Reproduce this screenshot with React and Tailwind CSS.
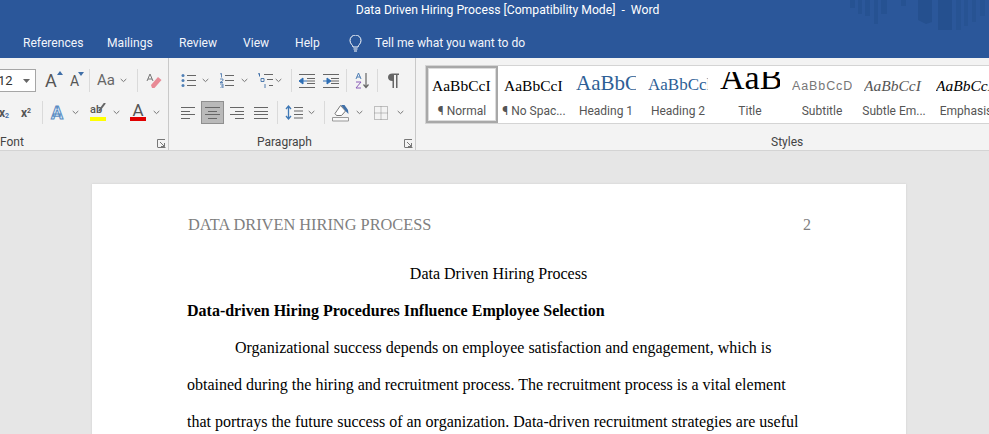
import React from "react";

const Chev = ({ className = "" }) => (
  <svg width="7" height="5" viewBox="0 0 7 5" className={`shrink-0 ${className}`} fill="none" stroke="#777" strokeWidth="1"><path d="M.7 1l2.800 2.600L6.300 1" /></svg>
);
const Sep = ({ className = "" }) => <div className={`w-px h-[23px] bg-[#dadada] shrink-0 ${className}`} />;
const Launcher = ({ className = "" }) => (
  <svg width="9" height="9" viewBox="0 0 9 9" className={`shrink-0 ${className}`} fill="none" stroke="#777" strokeWidth="1"><path d="M.5 8V.5H8M3 3l4.500 4.500M7.500 4v3.500H4M.5 8.500h8" /></svg>
);
const Lines = ({ rows, className = "", w = 15, h = 12, color = "#666" }) => (
  <svg width={w} height={h} viewBox={`0 0 ${w} ${h}`} className={`shrink-0 ${className}`} stroke={color} strokeWidth="1" fill="none">
    {rows.map((r, i) => <path key={i} d={`M${r[0]} ${Math.round(i * (h - 1) / (rows.length - 1)) + 0.5}H${r[1]}`} />)}
  </svg>
);
const ListIcon = ({ kind, className = "" }) => (
  <svg width="15" height="15" viewBox="0 0 15 15" className={`shrink-0 ${className}`} fill="none">
    <path d="M6 2.500h9M6 7.500h9M6 12.500h9" stroke="#666" />
    {kind === "b" ? (
      <g fill="#4f7fb5"><circle cx="2" cy="2.500" r="1.500" /><circle cx="2" cy="7.500" r="1.500" /><circle cx="2" cy="12.500" r="1.500" /></g>
    ) : (
      <g stroke="#3f6fa8"><path d="M1 1l1.500-.5v4M1 6h3v1.500L1 9.500h3M1 11h3v4H1M2 13h2" strokeWidth=".8" /></g>
    )}
  </svg>
);
const Multi = ({ className = "" }) => (
  <svg width="16" height="15" viewBox="0 0 16 15" className={`shrink-0 ${className}`} fill="none">
    <path d="M7 1.500h9M10 6.500h6M12 12.500h4" stroke="#666" />
    <path d="M1 1l1.500-.5v3" stroke="#3f6fa8" />
    <path d="M4 5.500h3v3H4zM8 11v4" stroke="#3f6fa8" strokeWidth=".9" />
  </svg>
);
const Indent = ({ flip, className = "" }) => (
  <svg width="16" height="14" viewBox="0 0 16 14" className={`shrink-0 ${className}`} fill="none">
    <path d="M0 .5h16M0 13.500h16M8 4.500h8M8 7h8M8 9.500h8" stroke="#666" />
    {flip ? <path d="M0 7h4V4l4 3-4 3V7" fill="#2f6fb5" stroke="#2f6fb5" /> : <path d="M8 7H4V4L0 7l4 3V7" fill="#2f6fb5" stroke="#2f6fb5" />}
  </svg>
);

function FontGroup() {
  return (
    <section className="w-[169px] shrink-0 h-[92px] relative border-r border-[#c9c9c9] overflow-hidden">
      <div className="flex items-center h-[23px] mt-[11px]">
        <div className="w-[46px] -ml-[10px] h-[23px] bg-white border border-[#a6a6a6] flex items-center shrink-0">
          <span className="ml-[7px] text-[13px] text-[#333] w-[25px]">12</span>
          <svg width="7" height="4" viewBox="0 0 7 4"><path d="M0 0h7L3.500 4z" fill="#666" /></svg>
        </div>
        <div className="ml-[9px] w-[14px] text-[18px] leading-none text-[#555] relative">A<svg width="6" height="4" viewBox="0 0 6 4" className="absolute -top-[1px] left-[12px]"><path d="M0 4l3-4 3 4z" fill="#3f6fa8" /></svg></div>
        <div className="ml-[11px] w-[13px] text-[14px] leading-none text-[#555] relative">A<svg width="6" height="4" viewBox="0 0 6 4" className="absolute -top-[2px] left-[8px]"><path d="M0 0h6L3 4z" fill="#3f6fa8" /></svg></div>
        <Sep className="ml-[6px]" />
        <span className="ml-[7px] text-[15px] text-[#666] w-[17px]">Aa</span>
        <Chev className="ml-[6px]" />
        <Sep className="ml-[10px]" />
        <svg width="16" height="16" viewBox="0 0 16 16" className="ml-[8px] shrink-0">
          <path d="M5 12l7-8 3.500 3-7 8H6z" fill="#e88a95" />
          <path d="M1 8L4 1l3 7M2 6h4" fill="none" stroke="#777" />
        </svg>
      </div>
      <div className="flex items-center h-[23px] mt-[9px]">
        <span className="w-[10px] -ml-[1px] text-[12px] font-bold text-[#555] leading-none">x<sub className="text-[7px] text-[#3f6fa8]">2</sub></span>
        <span className="ml-[12px] w-[12px] text-[12px] font-bold text-[#555] leading-none">x<sup className="text-[7px]">2</sup></span>
        <Sep className="ml-[9px]" />
        <span className="ml-[8px] w-[14px] text-[18px] leading-none font-bold text-[#dcebf8] [-webkit-text-stroke:1px_#5b8dc3]">A</span>
        <Chev className="ml-[7px]" />
        <div className="ml-[11px] w-[16px] h-[20px] relative shrink-0">
          <span className="block text-[11px] leading-[14px] text-[#555] font-medium">ab</span>
          <svg width="8" height="10" viewBox="0 0 8 10" className="absolute top-0 right-0"><path d="M7 0L1 8" stroke="#666" strokeWidth="2" /></svg>
          <div className="absolute left-0 top-[14px] w-[16px] h-[4px] bg-[#ffff00]" />
        </div>
        <Chev className="ml-[7px]" />
        <div className="ml-[10px] w-[16px] h-[20px] relative shrink-0">
          <span className="block text-center text-[17px] leading-[15px] text-[#555]">A</span>
          <div className="absolute left-0 top-[14px] w-[16px] h-[4px] bg-[#e00000]" />
        </div>
        <Chev className="ml-[7px]" />
      </div>
      <span className="absolute left-0 top-[76px] text-[12px] leading-[16px] text-[#444]">Font</span>
      <Launcher className="absolute left-[157px] top-[81px]" />
    </section>
  );
}

function ParagraphGroup() {
  return (
    <section className="w-[247px] shrink-0 h-[92px] relative border-r border-[#c9c9c9] overflow-hidden">
      <div className="flex items-center h-[23px] mt-[11px] pl-[12px]">
        <ListIcon kind="b" />
        <Chev className="ml-[6px]" />
        <ListIcon kind="n" className="ml-[10px]" />
        <Chev className="ml-[7px]" />
        <Multi className="ml-[9px]" />
        <Chev className="ml-[2px]" />
        <Sep className="ml-[9px]" />
        <Indent className="ml-[7px]" />
        <Indent flip className="ml-[8px]" />
        <Sep className="ml-[7px]" />
        <svg width="15" height="17" viewBox="0 0 15 17" className="ml-[8px] shrink-0" fill="none">
          <path d="M1 7l2.500-6L6 7M1.800 5h3.500" stroke="#4f7fb5" />
          <path d="M1 10h5l-5 6h5" stroke="#8a5cb8" />
          <path d="M11 1v14M8.500 12.500L11 15.500l2.500-3" stroke="#666" strokeWidth="1.200" />
        </svg>
        <Sep className="ml-[7px]" />
        <svg width="11" height="15" viewBox="0 0 11 15" className="ml-[10px] shrink-0">
          <path d="M4.500 15V8C1.500 8 0 6.300 0 4.200S1.500 .5 4.500 .5H11v1.500H9.500v13H8V2H6v13z" fill="#666" />
        </svg>
      </div>
      <div className="flex items-center h-[23px] mt-[9px] pl-[12px]">
        <Lines rows={[[0, 14], [0, 9], [0, 14], [0, 9]]} />
        <div className="ml-[5px] w-[23px] h-[23px] bg-[#b9b9b9] border border-[#8f8f8f] flex items-center justify-center shrink-0">
          <Lines rows={[[0, 15], [3, 12], [0, 15], [3, 12]]} />
        </div>
        <Lines rows={[[0, 14], [5, 14], [0, 14], [5, 14]]} className="ml-[6px]" />
        <Lines rows={[[0, 14], [0, 14], [0, 14], [0, 14]]} className="ml-[9px]" />
        <Sep className="ml-[8px]" />
        <svg width="18" height="17" viewBox="0 0 18 17" className="ml-[7px] shrink-0" fill="none">
          <path d="M3.500 2v13M1 5l2.500-3L6 5M1 12l2.500 3L6 12" stroke="#3f78b5" strokeWidth="1.300" />
          <path d="M9 3.500h9M9 7h9M9 10.500h9M9 14h9" stroke="#666" />
        </svg>
        <Chev className="ml-[5px]" />
        <Sep className="ml-[9px]" />
        <svg width="18" height="18" viewBox="0 0 18 18" className="ml-[7px] shrink-0" fill="none">
          <path d="M8.500 1.500l5 5.500-4 4.500H4.500L3 9.500z" stroke="#777" fill="#fff" />
          <path d="M9 1h3.500l3.500 5 .5 4-3-3z" fill="#3f6fa8" />
          <path d="M.5 13.500h16v3.500H.5z" stroke="#999" fill="#f8f8f8" />
        </svg>
        <Chev className="ml-[6px]" />
        <svg width="14" height="14" viewBox="0 0 14 14" className="ml-[11px] shrink-0" fill="none" stroke="#8a8a8a" strokeDasharray="1 1">
          <path d="M.5.5h13v13H.5zM7 .5v13M.5 7h13" />
        </svg>
        <Chev className="ml-[9px]" />
      </div>
      <span className="absolute left-[88px] top-[76px] text-[12px] leading-[16px] text-[#444]">Paragraph</span>
      <Launcher className="absolute left-[235px] top-[81px]" />
    </section>
  );
}

const styleItems = [
  { label: "¶ Normal", text: "AaBbCcI", cls: "text-[15.5px] text-black mb-[3px]", sel: true },
  { label: "¶ No Spac...", text: "AaBbCcI", cls: "text-[15.5px] text-black mb-[3px]" },
  { label: "Heading 1", text: "AaBbC", cls: "text-[21px] text-[#2e5f96] mb-[2px]" },
  { label: "Heading 2", text: "AaBbCcl", cls: "text-[17px] text-[#2e5f96] mb-[3px]" },
  { label: "Title", text: "AaB", cls: "text-[34px] text-black mb-[1px]" },
  { label: "Subtitle", text: "AaBbCcD", cls: "text-[12.5px] tracking-[.9px] text-[#777] mb-[4px] font-['Liberation_Sans']" },
  { label: "Subtle Em...", text: "AaBbCcI", cls: "text-[15.5px] italic text-[#555] mb-[3px]" },
  { label: "Emphasis", text: "AaBbCcI", cls: "text-[15.5px] italic text-black mb-[3px]" },
];

function StylesGroup() {
  return (
    <section className="flex-1 h-[92px] relative overflow-hidden">
      <div className="ml-[9px] mt-[7px] w-[700px] h-[59px] bg-white border border-[#d4d4d4] flex">
        {styleItems.map((s) => (
          <div key={s.label} className={`w-[72px] shrink-0 h-[57px] flex flex-col items-center ${s.sel ? "border-2 border-[#a8a8a8] outline outline-1 -outline-offset-3 outline-[#dcdcdc] pt-[4px]" : "pt-[6px]"}`}>
            <div className="w-[60px] h-[24px] overflow-hidden flex items-end justify-start font-['Liberation_Serif'] leading-none whitespace-nowrap">
              <span className={`leading-none ${s.cls}`}>{s.text}</span>
            </div>
            <span className="mt-[7px] text-[12px] leading-[16px] text-[#555] whitespace-nowrap">{s.label}</span>
          </div>
        ))}
      </div>
      <span className="absolute left-[355px] top-[76px] text-[12px] leading-[16px] text-[#444]">Styles</span>
    </section>
  );
}

export default function App() {
  return (
    <div className="w-[989px] h-[434px] overflow-hidden bg-[#e6e6e6] font-['Roboto',sans-serif]">
      <header className="h-[58px] bg-[#2b579a] text-white relative">
        <svg width="140" height="32" viewBox="0 0 140 32" className="absolute left-[850px] top-0">
          <g fill="#25508f">
            <path d="M0 0h5v8H0zM8 0h4v14H8zM15 0h5v16h-5zM24 0h4v24h-4zM31 0h6v14h-6zM51 0h5v6h-5z" opacity=".7" />
            <path d="M68 0h14v22l-6 2-8-4zM88 0h14v30H88z" />
            <path d="M106 0h5v30h-5zM114 0h4v26h-4zM122 0h4v22h-4zM130 0h5v16h-5z" opacity=".6" />
          </g>
        </svg>
        <div className="h-[21px] flex items-center justify-center text-[12.2px] whitespace-pre pl-[26px]">Data Driven Hiring Process [Compatibility Mode]  -  Word</div>
        <nav className="flex items-center h-[37px] pt-[7px] pl-[23px] text-[12.1px] text-[#f2f5fa]">
          <span className="w-[84px]">References</span>
          <span className="w-[72px]">Mailings</span>
          <span className="w-[64px]">Review</span>
          <span className="w-[52px]">View</span>
          <span className="w-[54px]">Help</span>
          <svg width="13" height="17" viewBox="0 0 13 17" fill="none" stroke="#fff" className="shrink-0">
            <path d="M4 12c0-2-3-3-3-6.500a5.500 5.500 0 0 1 11 0C12 9 9 10 9 12zM4.500 14h4M5 16h3" />
          </svg>
          <span className="ml-[13px]">Tell me what you want to do</span>
        </nav>
      </header>
      <div className="h-[93px] bg-[#f3f3f3] border-b border-[#d4d4d4] flex">
        <FontGroup />
        <ParagraphGroup />
        <StylesGroup />
      </div>
      <main className="ml-[92px] mt-[33px] w-[814px] h-[300px] bg-white pl-[95px] pr-[95px] font-['Liberation_Serif',serif] text-[16px] text-black shadow-[0_0_2px_#ccc]">
        <div className="flex justify-between pt-[31px] pl-[1px] text-[#7f7f7f] leading-[20px]">
          <span className="text-[16.35px]">DATA DRIVEN HIRING PROCESS</span>
          <span className="text-[16px]">2</span>
        </div>
        <p className="text-center mt-[29px] leading-[20px] pr-[1px]">Data Driven Hiring Process</p>
        <p className="font-bold mt-[17px] leading-[20px]">Data-driven Hiring Procedures Influence Employee Selection</p>
        <div className="mt-[8px] leading-[37px] whitespace-nowrap">
          <p className="pl-[48px]">Organizational success depends on employee satisfaction and engagement, which is</p>
          <p>obtained during the hiring and recruitment process. The recruitment process is a vital element</p>
          <p>that portrays the future success of an organization. Data-driven recruitment strategies are useful</p>
        </div>
      </main>
    </div>
  );
}
